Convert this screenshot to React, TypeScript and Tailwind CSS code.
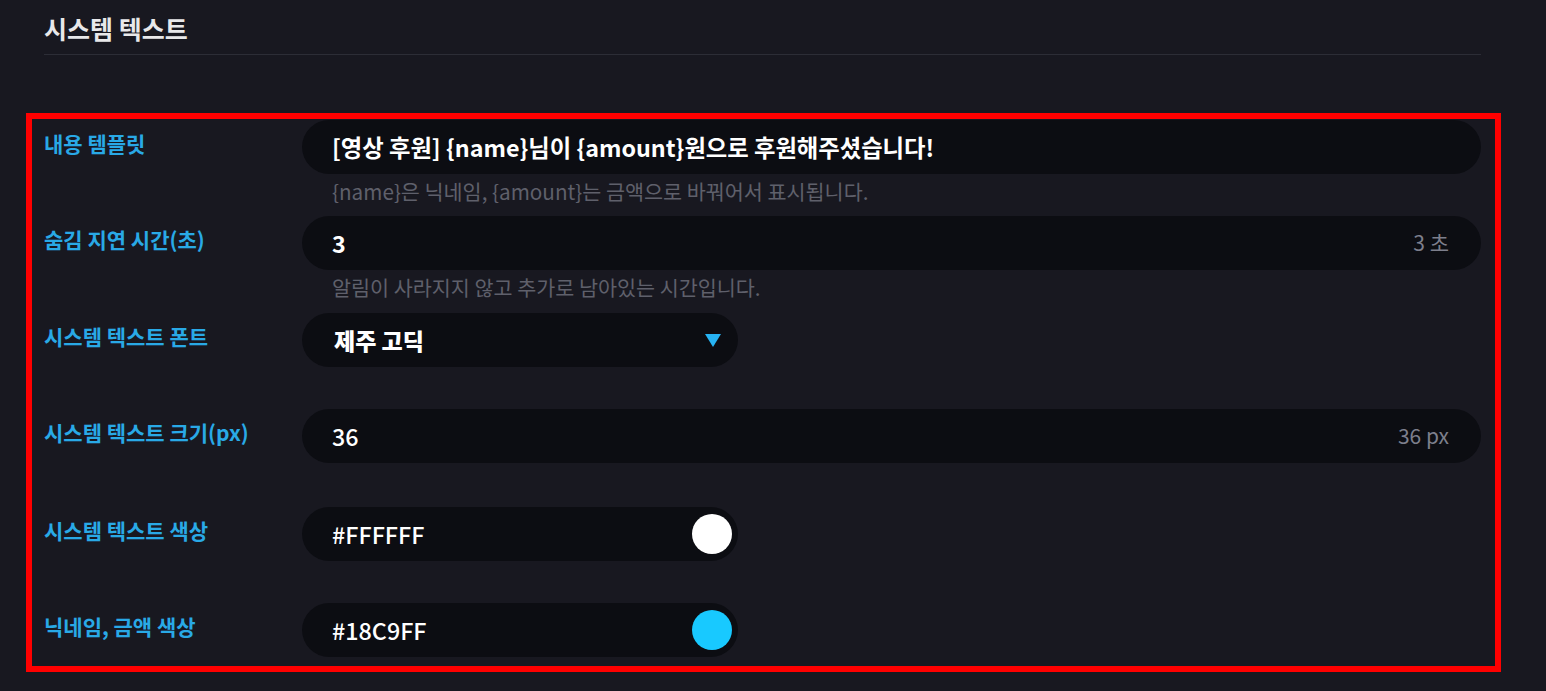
import type { ReactNode } from "react";

const font = { fontFamily: '"Noto Sans CJK KR", "Noto Sans", sans-serif' };

function Label({ children }: { children: ReactNode }) {
  return (
    <div className="w-[258px] shrink-0 h-[54px] flex items-center pb-[6px] text-[21px] font-semibold text-[#29a9e6] whitespace-nowrap">
      {children}
    </div>
  );
}

function Row({ label, hint, gap = "h-[42px]", children }: { label: string; hint?: string; gap?: string; children: ReactNode }) {
  return (
    <div className="flex">
      <Label>{label}</Label>
      <div className="flex-1 min-w-0">
        {children}
        {hint ? (
          <div className={`${gap} pt-[5px]`}>
            <p className="h-[24px] pl-[30px] text-[20.7px] leading-[24px] text-[#5f606b] whitespace-nowrap">{hint}</p>
          </div>
        ) : (
          <div className={gap} />
        )}
      </div>
    </div>
  );
}

function Field({ value, suffix, wide = true, right, bold = true }: { value: string; suffix?: string; wide?: boolean; right?: ReactNode; bold?: boolean }) {
  return (
    <div
      className={`h-[54px] rounded-full bg-[#0c0d12] flex items-center pl-[30px] ${right ? "pr-[6px]" : "pr-[32px]"} ${wide ? "w-full" : "w-[436px]"}`}
    >
      <span className={`flex-1 truncate text-[23.3px] text-white ${bold ? "font-bold" : "font-medium"}`}>{value}</span>
      {suffix && <span className="text-[21px] text-[#7d7f8c]">{suffix}</span>}
      {right}
    </div>
  );
}

export default function App() {
  return (
    <div className="min-h-screen w-full bg-[#181820] pl-[26px] pt-[12px]" style={font}>
      <div className="ml-[18px] w-[1437px]">
        <h1 className="text-[25px] font-bold text-[#e8e8ea] leading-[32px]">시스템 텍스트</h1>
        <div className="mt-[10px] h-px bg-[#2c2d36]" />
      </div>

      <div className="mt-[58px] w-[1475px] border-[6px] border-[#ff0000] pl-[12px] pr-[14px] pt-[1px] pb-[9px]">
        <Row label="내용 템플릿" hint="{name}은 닉네임, {amount}는 금액으로 바꿔어서 표시됩니다.">
          <Field value="[영상 후원] {name}님이 {amount}원으로 후원해주셨습니다!" />
        </Row>
        <Row label="숨김 지연 시간(초)" hint="알림이 사라지지 않고 추가로 남아있는 시간입니다." gap="h-[43px]">
          <Field value="3" suffix="3 초" />
        </Row>
        <Row label="시스템 텍스트 폰트">
          <div className="w-[436px] h-[54px] rounded-full bg-[#0c0d12] flex items-center pl-[32px] pr-[17px]">
            <span className="flex-1 text-[23px] font-extrabold text-white">제주 고딕</span>
            <svg width="16" height="13" viewBox="0 0 16 13">
              <path d="M0 0 H16 L8 13 Z" fill="#27b3f3" />
            </svg>
          </div>
        </Row>
        <Row label="시스템 텍스트 크기(px)" gap="h-[44px]">
          <Field value="36" suffix="36 px" bold={false} />
        </Row>
        <Row label="시스템 텍스트 색상">
          <Field
            value="#FFFFFF"
            wide={false}
            bold={false}
            right={<span className="w-[40px] h-[40px] rounded-full bg-white shrink-0" />}
          />
        </Row>
        <div className="flex">
          <Label>닉네임, 금액 색상</Label>
          <Field
            value="#18C9FF"
            wide={false}
            bold={false}
            right={<span className="w-[40px] h-[40px] rounded-full bg-[#18c9ff] shrink-0" />}
          />
        </div>
      </div>
    </div>
  );
}
